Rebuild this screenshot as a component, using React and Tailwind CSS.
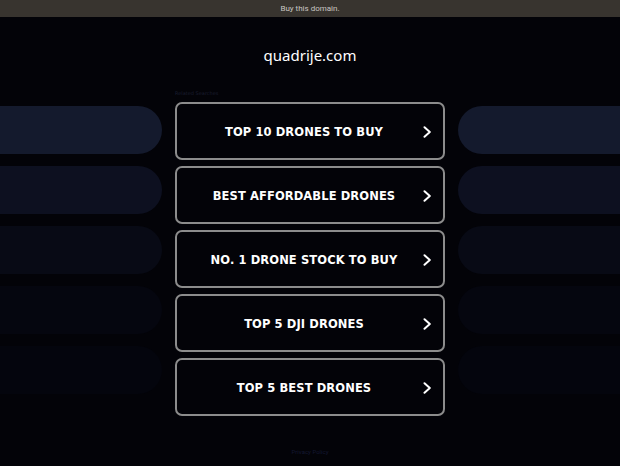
import React from 'react';

const links = ['TOP 10 DRONES TO BUY', 'BEST AFFORDABLE DRONES', 'NO. 1 DRONE STOCK TO BUY', 'TOP 5 DJI DRONES', 'TOP 5 BEST DRONES'];
const pillColors = ['bg-[#141a2d]', 'bg-[#0d1020]', 'bg-[#080a15]', 'bg-[#05060f]', 'bg-[#04050d]'];

const Chevron = () => (
    <svg width="9" height="12" viewBox="0 0 9 12" fill="none">
        <path d="M1.5 1.2 L6.8 6 L1.5 10.8" stroke="white" strokeWidth="2" strokeLinecap="round" strokeLinejoin="round" />
    </svg>
);

const App = () => {
    return (
        <div className="w-[620px] h-[466px] bg-[#030308] overflow-hidden font-['DejaVu_Sans',sans-serif]">
            {/* top banner */}
            <div className="h-[17px] bg-[#38342f] flex items-center justify-center">
                <span className="text-[8px] text-[#c8c6c2] font-['Roboto',sans-serif]">Buy this domain.</span>
            </div>

            <div className="h-[76px] flex items-center justify-center">
                <span className="text-[15px] text-white font-['Noto_Sans',sans-serif]">quadrije.com</span>
            </div>

            <div className="flex">
                {/* left pills */}
                <div className="w-[162px] pt-[13px] flex flex-col gap-[12px]">
                    {pillColors.map((c, i) => (
                        <div key={i} className={`h-[48px] rounded-r-full ${c}`}></div>
                    ))}
                </div>

                <div className="w-[296px] flex flex-col items-center">
                    <div className="w-[270px] text-[5px] text-[#1a1e30] leading-none mb-[6px] -mt-[2px]">Related Searches</div>
                    <div className="w-[270px] flex flex-col gap-[6px]">
                        {links.map(l => (
                            <div key={l} className="h-[58px] border-2 border-[#8c8c8c] rounded-[7px] flex items-center relative">
                                <span className="flex-1 text-center text-white font-bold text-[11.5px] tracking-[0.1px] pr-[12px] mt-[3px]">{l}</span>
                                <span className="absolute right-[11px] top-[22px]"><Chevron /></span>
                            </div>
                        ))}
                    </div>
                    <div className="mt-[31px] text-[6px] text-[#141832] font-['Roboto',sans-serif]">Privacy Policy</div>
                </div>

                {/* right pills */}
                <div className="flex-1 pt-[13px] flex flex-col gap-[12px]">
                    {pillColors.map((c, i) => (
                        <div key={i} className={`h-[48px] rounded-l-full ${c}`}></div>
                    ))}
                </div>
            </div>
        </div>
    );
};

export default App;
